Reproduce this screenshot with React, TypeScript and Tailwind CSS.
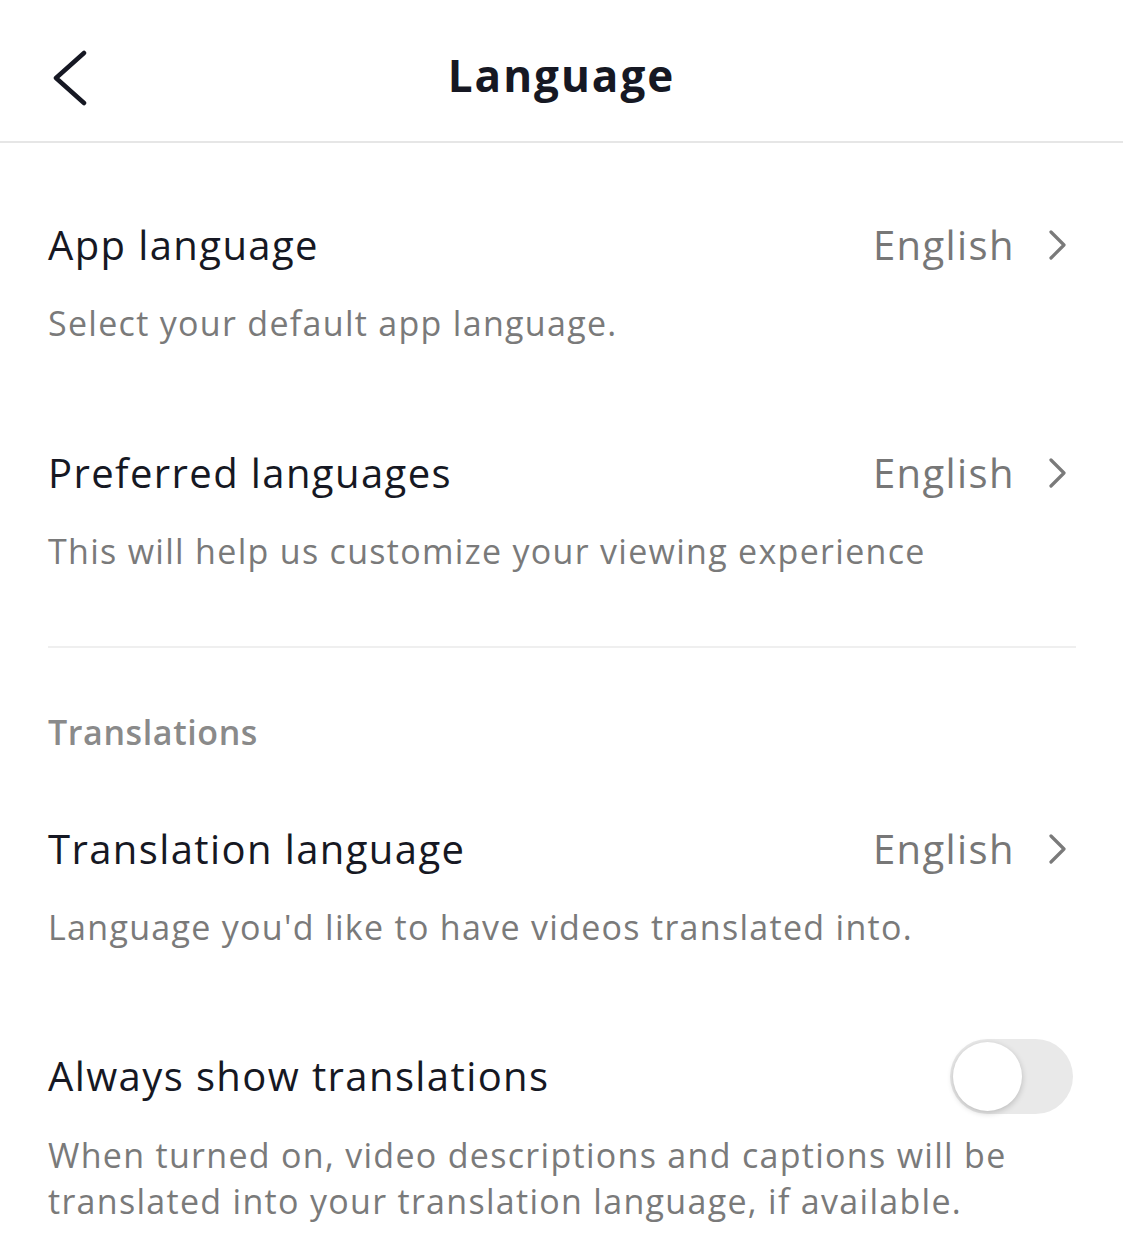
import React, { useState } from "react";

const font = { fontFamily: "'Open Sans', 'Noto Sans', sans-serif" };

function Chevron() {
  return (
    <svg width="20" height="30" viewBox="0 0 20 30" className="ml-[32px]">
      <path d="M4 2 L17 15 L4 28" fill="none" stroke="#7a7a7a" strokeWidth="3.2" strokeLinecap="round" strokeLinejoin="round" />
    </svg>
  );
}

function SettingRow({ title, value, desc, className }: { title: string; value: string; desc: string; className: string }) {
  return (
    <div className={className}>
      <div className="flex h-[60px] items-center justify-between">
        <span className="text-[40px] tracking-[1.4px] text-[#161823]">{title}</span>
        <div className="flex items-center">
          <span className="text-[40px] tracking-[1.4px] text-[#777777]">{value}</span>
          <Chevron />
        </div>
      </div>
      <p className="mt-[25px] text-[34px] leading-[46px] tracking-[1.3px] text-[#7a7a7a]">{desc}</p>
    </div>
  );
}

export default function App() {
  const [on, setOn] = useState(false);
  return (
    <div className="min-h-screen w-[1123px] bg-white" style={font}>
      <header className="relative flex h-[143px] items-center justify-center border-b-2 border-[#e6e6e6]">
        <button className="absolute left-[50px] top-[50px]">
          <svg width="40" height="56" viewBox="0 0 40 56">
            <path d="M34 3 L6 28 L34 53" fill="none" stroke="#161823" strokeWidth="4.5" strokeLinecap="round" strokeLinejoin="round" />
          </svg>
        </button>
        <h1 className="mt-[8px] text-[44px] font-bold tracking-[2px] text-[#161823]">Language</h1>
      </header>

      <main className="pl-[48px] pr-[56px]">
        <SettingRow className="mt-[72px]" title="App language" value="English" desc="Select your default app language." />
        <SettingRow className="mt-[97px]" title="Preferred languages" value="English" desc="This will help us customize your viewing experience" />

        <div className="-mr-[9px] mt-[72px] h-[2px] bg-[#efefef]" />

        <h2 className="mt-[61px] text-[34px] font-semibold leading-[46px] tracking-[0.6px] text-[#8a8a8a]">Translations</h2>

        <SettingRow className="mt-[64px]" title="Translation language" value="English" desc="Language you'd like to have videos translated into." />

        <div className="mt-[96px]">
          <div className="-mr-[6px] flex h-[60px] items-center justify-between">
            <span className="text-[40px] tracking-[1.4px] text-[#161823]">Always show translations</span>
            <button
              onClick={() => setOn(!on)}
              className={`relative h-[75px] w-[123px] rounded-full ${on ? "bg-[#20d5ec]" : "bg-[#e9e9e9]"}`}
            >
              <span
                className={`absolute top-[3px] h-[69px] w-[69px] rounded-full bg-white shadow-[0_2px_6px_rgba(0,0,0,0.2)] ${on ? "left-[51px]" : "left-[3px]"}`}
              />
            </button>
          </div>
          <p className="mt-[26px] text-[34px] leading-[46px] tracking-[1.3px] text-[#7a7a7a]">
            When turned on, video descriptions and captions will be
            <br />
            translated into your translation language, if available.
          </p>
        </div>
      </main>
    </div>
  );
}
